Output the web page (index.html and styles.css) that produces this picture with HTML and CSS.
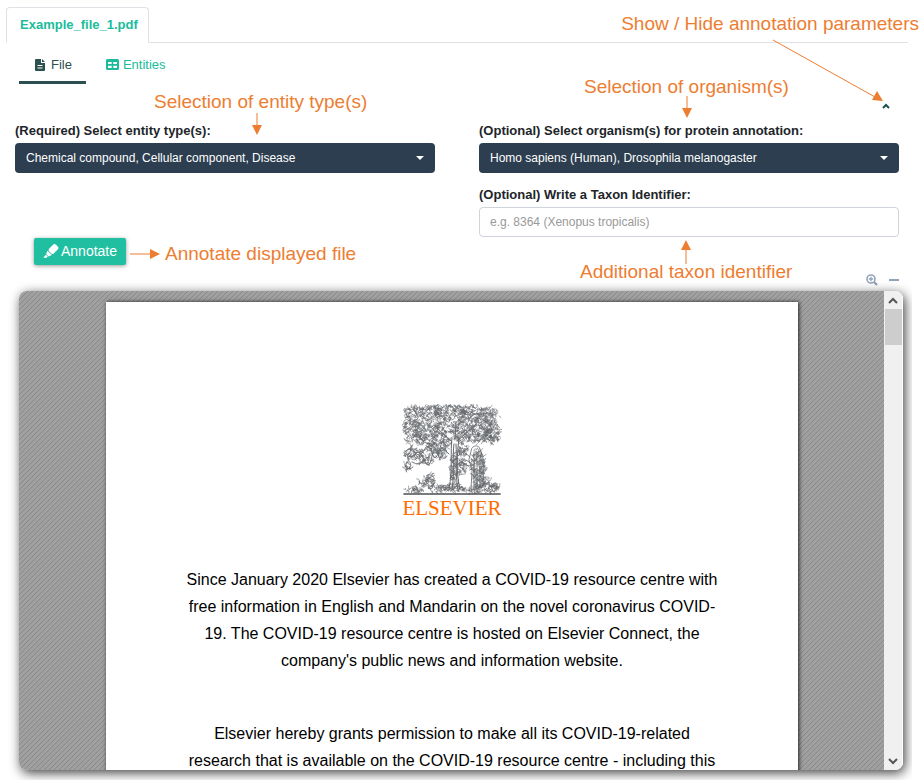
FILE: index.html
```html
<!DOCTYPE html>
<html lang="en">
<head>
<meta charset="utf-8">
<title>Example_file_1.pdf</title>
<link rel="stylesheet" href="styles.css">
</head>
<body>
<nav class="file-tabs"><a class="file-tab" href="#doc">Example_file_1.pdf</a></nav>
<main class="panel" id="doc">
  <nav class="views">
    <a class="view view-active" href="#file"><svg class="icon-file" viewBox="0 0 10 12"><path fill="currentColor" fill-rule="evenodd" d="M1 0h5v4h4v7a1 1 0 0 1-1 1H1a1 1 0 0 1-1-1V1a1 1 0 0 1 1-1zM2.500 6v1h5V6zM2.500 8.500v1h5v-1z"/><path fill="currentColor" d="M7 0l3 3H7z"/></svg>File</a>
    <a class="view" href="#entities"><svg class="icon-table" viewBox="0 0 13 12"><path fill="currentColor" fill-rule="evenodd" d="M1.500 0h10A1.500 1.500 0 0 1 13 1.500v8a1.500 1.500 0 0 1-1.500 1.500h-10A1.500 1.500 0 0 1 0 9.500v-8A1.500 1.500 0 0 1 1.500 0zM2 3v2h3.700V3zM7.300 3v2H11V3zM2 6.700v2.300h3.700V6.700zM7.300 6.700v2.300H11V6.700z"/></svg>Entities</a>
  </nav>
  <div class="toggle-row">
    <button class="plain toggle" aria-label="Show or hide parameters"><svg viewBox="0 0 8 6"><path d="M1 5 4 2l3 3" fill="none" stroke="currentColor" stroke-width="2"/></svg></button>
  </div>
  <form class="params">
    <div class="column">
      <div class="field">
        <label for="entity">(Required) Select entity type(s):</label>
        <span class="picker"><select id="entity"><option>Chemical compound, Cellular component, Disease</option></select></span>
      </div>
      <button class="annotate" type="button"><svg viewBox="0 0 15 14"><g fill="currentColor" transform="rotate(45 7.500 7)"><rect x="4.200" y="-2" width="6.600" height="9.500" rx="1.800"/><path d="M4.400 8.200h6.200L9.200 11.500H5.800zM6.200 12.200h2.600v2L6.200 16z"/></g></svg>Annotate</button>
    </div>
    <div class="column">
      <div class="field">
        <label for="organism">(Optional) Select organism(s) for protein annotation:</label>
        <span class="picker"><select id="organism"><option>Homo sapiens (Human), Drosophila melanogaster</option></select></span>
      </div>
      <div class="field">
        <label for="taxon">(Optional) Write a Taxon Identifier:</label>
        <input id="taxon" type="text" placeholder="e.g. 8364 (Xenopus tropicalis)">
      </div>
    </div>
  </form>
  <div class="tools">
    <button class="plain" aria-label="Zoom in"><svg class="icon-zoom" viewBox="0 0 12 12"><g fill="none" stroke="currentColor"><circle cx="5" cy="5" r="4" stroke-width="1.600"/><path d="M2.800 5h4.400M5 2.800v4.400" stroke-width="1.300"/><path d="M8 8l3 3" stroke-width="2.400"/></g></svg></button>
    <button class="plain" aria-label="Collapse"><span class="dash"></span></button>
  </div>
  <section class="viewer">
    <div class="canvas">
      <article class="page">
        <svg class="logo" viewBox="0 0 100 92"><g id="tree" fill="none" stroke="#66696d" stroke-linecap="round"></g></svg>
        <div class="brand">ELSEVIER</div>
        <p>Since January 2020 Elsevier has created a COVID-19 resource centre with<br>free information in English and Mandarin on the novel coronavirus COVID-<br>19. The COVID-19 resource centre is hosted on Elsevier Connect, the<br>company's public news and information website.</p>
        <p>Elsevier hereby grants permission to make all its COVID-19-related<br>research that is available on the COVID-19 resource centre - including this</p>
      </article>
    </div>
    <div class="scrollbar">
      <svg viewBox="0 0 18 18"><path d="M5 12l4-4 4 4" /></svg>
      <div class="thumb"></div>
      <svg class="down" viewBox="0 0 18 18"><path d="M5 7l4 4 4-4"/></svg>
    </div>
  </section>
</main>
<aside class="notes">
  <span class="note note-toggle">Show / Hide annotation parameters</span>
  <span class="note note-entity">Selection of entity type(s)</span>
  <span class="note note-organism">Selection of organism(s)</span>
  <span class="note note-annotate">Annotate displayed file</span>
  <span class="note note-taxon">Additional taxon identifier</span>
  <svg class="arrow arrow-toggle" viewBox="0 0 112 64"><path d="M1 1l102 57"/><path class="head" d="M111 62l-11-1 5-9z"/></svg>
  <svg class="arrow arrow-entity" viewBox="0 0 10 22"><path d="M5 0v14"/><path class="head" d="M0 12h10L5 22z"/></svg>
  <svg class="arrow arrow-organism" viewBox="0 0 10 22"><path d="M5 0v14"/><path class="head" d="M0 12h10L5 22z"/></svg>
  <svg class="arrow arrow-taxon" viewBox="0 0 10 24"><path d="M5 24V8"/><path class="head" d="M0 10h10L5 0z"/></svg>
  <svg class="arrow arrow-annotate" viewBox="0 0 30 10"><path d="M0 5h22"/><path class="head" d="M20 0v10l10-5z"/></svg>
</aside>
<script src="tree.js"></script>
</body>
</html>
```
FILE: styles.css
```css
* { box-sizing: border-box; }
body {
  margin: 0;
  height: 100vh;
  min-height: 500px;
  padding: 7px 11px 1px 0;
  display: flex;
  flex-direction: column;
  position: relative;
  overflow: hidden;
  background: #fff;
  color: #212529;
  font: 13px/20px "Liberation Sans", Arial, sans-serif;
}
a { text-decoration: none; color: #1abc9c; }
button, input, select { font: inherit; margin: 0; }
.file-tabs {
  display: flex;
  margin: 0 4px 0 6px;
  border-bottom: 1px solid #dee2e6;
}
.file-tab {
  padding: 7px 10px 7px 13px;
  margin-bottom: -1px;
  border: 1px solid #dee2e6;
  border-bottom-color: #fff;
  border-radius: 4px 4px 0 0;
  background: #fff;
  font-weight: bold;
}
.panel {
  flex: 1;
  min-height: 0;
  display: flex;
  flex-direction: column;
  overflow: hidden;
  padding: 0 9px 10px 15px;
}
.views { display: flex; gap: 4px; padding: 7px 4px 0; }
.view {
  display: flex;
  align-items: center;
  gap: 4px;
  padding: 5px 14px 6px 16px;
  border-bottom: 3px solid transparent;
}
.view-active { color: #2c4f4f; border-color: #2c4f4f; }
.icon-file { width: 10px; height: 12px; margin-right: 2px; }
.icon-table { width: 13px; height: 12px; }
.plain {
  display: flex;
  padding: 0;
  border: 0;
  background: none;
  color: #94a3b8;
}
.toggle-row {
  display: flex;
  justify-content: flex-end;
  padding: 19px 13px 12px 0;
}
.toggle { color: #1f4e50; }
.toggle svg { width: 8px; height: 6px; }
.params {
  display: grid;
  grid-template-columns: 1fr 1fr;
  gap: 44px;
  margin-right: 4px;
}
.column { display: flex; flex-direction: column; gap: 12px; }
.field { display: flex; flex-direction: column; gap: 2px; }
.field label { font-weight: bold; }
.picker { position: relative; }
.picker::after {
  content: "";
  position: absolute;
  right: 11px;
  top: 13px;
  border: 4px solid transparent;
  border-top-color: #fff;
  border-bottom: 0;
}
select {
  display: block;
  width: 100%;
  height: 30px;
  padding: 0 11px;
  appearance: none;
  border: 0;
  border-radius: 4px;
  background: #2c3e50;
  color: #fff;
  font-size: 12px;
}
input {
  height: 30px;
  padding: 0 10px;
  border: 1px solid #ced4da;
  border-radius: 4px;
  font-size: 12px;
}
input::placeholder { color: #999; opacity: 1; }
.annotate {
  align-self: flex-start;
  display: flex;
  align-items: center;
  gap: 3px;
  margin: 53px 0 0 19px;
  padding: 3px 9px;
  border: 0;
  border-radius: 2px;
  background: #20bfa2;
  color: #fff;
  font-size: 14px;
  line-height: 21px;
  box-shadow: 0 1px 4px rgba(0, 0, 0, .4);
}
.annotate svg { width: 15px; height: 14px; overflow: visible; }
.tools {
  display: flex;
  justify-content: flex-end;
  align-items: center;
  gap: 11px;
  height: 12px;
  margin: 9px 4px 5px 0;
}
.icon-zoom { width: 12px; height: 12px; }
.dash { width: 10px; height: 2px; background: currentColor; }
.viewer {
  flex: 1;
  min-height: 0;
  display: flex;
  margin-left: 4px;
  border-radius: 8px;
  overflow: hidden;
  box-shadow: 2px 3px 12px rgba(0, 0, 0, .75);
}
.canvas {
  flex: 1;
  overflow: hidden;
  padding: 11px 86px 0 87px;
  background: linear-gradient(135deg, #a0a0a0 38%, #898989 38% 50%, #a0a0a0 50% 88%, #898989 88%) 0 0 / 5px 5px;
}
.page {
  min-height: 100%;
  padding-top: 102px;
  background: #fff;
  color: #000;
  text-align: center;
  box-shadow: 1px 0 4px rgba(0, 0, 0, .8);
}
.logo { display: block; width: 100px; height: 92px; margin: 0 auto; }
.brand {
  font: 21px/24px "Liberation Serif", "Times New Roman", serif;
  color: #ff6c00;
}
.page p { margin: 0 0 46px; font-size: 16px; line-height: 27px; }
.brand + p { margin-top: 46px; }
.scrollbar {
  width: 19px;
  display: flex;
  flex-direction: column;
  align-items: center;
  background: #f0f0f0;
  border-right: 1px solid #fff;
}
.scrollbar svg { width: 18px; height: 18px; fill: none; stroke: #555; stroke-width: 2; }
.thumb { width: 17px; height: 36px; background: #cdcdcd; }
.down { margin-top: auto; }
.note {
  position: absolute;
  color: #ed7d31;
  font-size: 19px;
  line-height: 24px;
  white-space: nowrap;
}
.note-toggle { right: 4px; top: 12px; }
.note-entity { left: 154px; top: 90px; }
.note-organism { left: 584px; top: 75px; }
.note-annotate { left: 165px; top: 242px; }
.note-taxon { left: 580px; top: 260px; }
.arrow { position: absolute; fill: none; stroke: #ed7d31; }
.head { fill: #ed7d31; stroke: none; }
.arrow-toggle { left: 772px; top: 39px; width: 112px; height: 64px; }
.arrow-entity { left: 252px; top: 113px; width: 10px; height: 22px; }
.arrow-organism { left: 682px; top: 96px; width: 10px; height: 22px; }
.arrow-taxon { left: 681px; top: 240px; width: 10px; height: 24px; }
.arrow-annotate { left: 130px; top: 249px; width: 30px; height: 10px; }
```
FILE: tree.js
```js
// Engraved-style tree: clusters of small leaf curls around a trunk and a standing figure.
let seed = 7;
const rnd = () => (seed = (seed * 16807) % 2147483647) / 2147483647;
const tree = document.getElementById("tree");
function stroke(d, width, color) {
  const p = document.createElementNS("http://www.w3.org/2000/svg", "path");
  p.setAttribute("d", d);
  p.setAttribute("stroke-width", width);
  if (color) p.setAttribute("stroke", color);
  tree.appendChild(p);
}
function leaves(cx, cy, rx, ry, count, width) {
  let d = "";
  for (let i = 0; i < count; i++) {
    const a = rnd() * 6.283, r = Math.sqrt(rnd());
    const x = cx + Math.cos(a) * r * rx, y = cy + Math.sin(a) * r * ry;
    const s = () => ((rnd() - 0.5) * 6).toFixed(1);
    d += `M${x.toFixed(1)} ${y.toFixed(1)}q${s()} ${s()} ${s()} ${s()}`;
  }
  stroke(d, width);
}
[[12,10,11,8],[30,9,13,8],[50,9,15,8],[70,9,13,8],[87,11,11,8],[10,24,9,9],[25,25,12,10],[43,24,10,9],[62,22,12,8],[79,24,12,9],[90,27,8,10],[14,36,10,6],[30,37,9,6],[88,35,9,5],[73,34,8,5],[43,38,6,6],[60,34,8,6]]
  .forEach(([x, y, rx, ry]) => leaves(x, y, rx, ry, rx * ry * 1.1, 0.6));
stroke("M50 34C48 48 51 62 47 86M57 34c-2 16-3 34 1 52M52 40c-2 14 1 26-2 46M54 40c1 16-1 28 2 46M50 38 35 24M53 36 54 18M55 37 72 22M47 50 38 42M56 52l10-8M57 56l9 6", 1);
stroke("M3 48q6-7 10 0t9-2 8 3 8-5 4 6M4 50q5 6 9 0t9 6 8-4 8 4M6 56q6 6 0 9M10 58q8 5 12-2M3 62q4 5 8 1", 0.9);
[[12,50,10,6],[32,46,8,6],[24,56,8,4],[5,62,4,4],[41,50,5,5],[60,62,5,9],[61,46,5,7],[24,80,9,4],[27,74,6,4],[12,86,10,3],[35,84,10,4],[52,84,11,4],[52,66,4,18],[85,84,10,5],[84,77,5,4],[93,84,5,4],[69,86,10,3]]
  .forEach(([x, y, rx, ry]) => leaves(x, y, rx, ry, rx * ry * 1.2, 0.6));
stroke("M70 44c2-3 7-3 8 1l4 12-1 26-12 3 1-20-3-10zM72 48v36M75 48v36M78 50v34M80 54v28M68 53l-6-5M64 56l6 4", 0.8);
leaves(76, 65, 7, 20, 190, 0.6);
stroke("M2 90H98", 1.6, "#4b4d50");
```
